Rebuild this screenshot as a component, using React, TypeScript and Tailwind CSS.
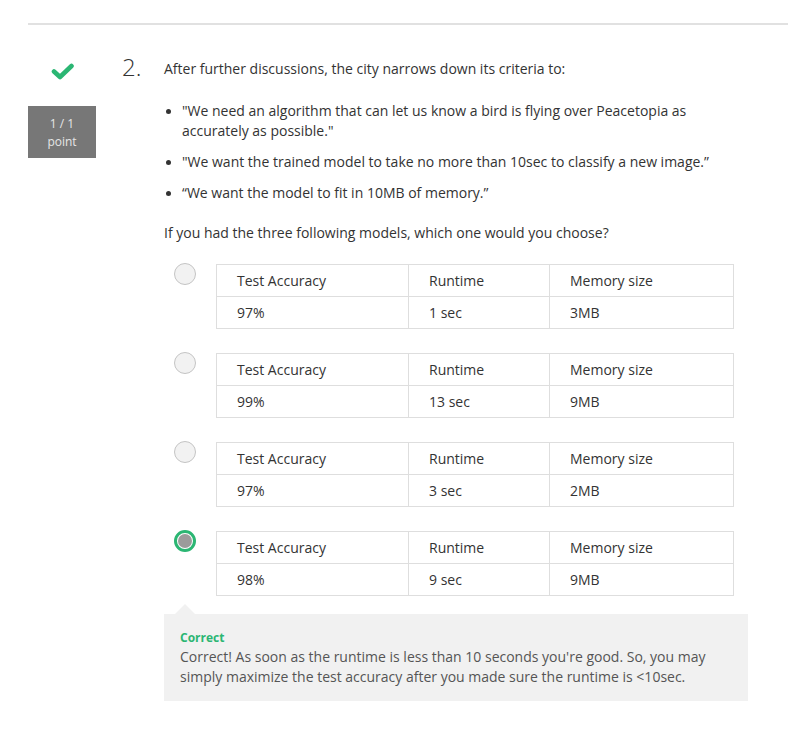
import React from "react";

const rows = [
  { acc: "97%", rt: "1 sec", mem: "3MB", selected: false },
  { acc: "99%", rt: "13 sec", mem: "9MB", selected: false },
  { acc: "97%", rt: "3 sec", mem: "2MB", selected: false },
  { acc: "98%", rt: "9 sec", mem: "9MB", selected: true },
];

function Radio({ selected }: { selected: boolean }) {
  if (selected) {
    return (
      <div className="w-[22px] h-[22px] rounded-full border-[3px] border-[#2bb673] bg-white p-[1px] shrink-0">
        <div className="w-full h-full rounded-full bg-[#9b9b9b]" />
      </div>
    );
  }
  return <div className="w-[22px] h-[22px] rounded-full border border-[#c4c4c4] bg-[#f2f2f2] shrink-0" />;
}

function Option({ acc, rt, mem, selected }: { acc: string; rt: string; mem: string; selected: boolean }) {
  return (
    <div className="flex items-start">
      <div className="ml-[10px] mt-[-1px]">
        <Radio selected={selected} />
      </div>
      <div className="ml-[20px] w-[518px] border border-[#dedede] text-[14px] text-[#333]">
        <div className="flex h-[32px] border-b border-[#dedede]">
          <div className="w-[192px] border-r border-[#dedede] pl-[20px] flex items-center">Test Accuracy</div>
          <div className="w-[141px] border-r border-[#dedede] pl-[20px] flex items-center">Runtime</div>
          <div className="flex-1 pl-[20px] flex items-center">Memory size</div>
        </div>
        <div className="flex h-[31px]">
          <div className="w-[192px] border-r border-[#dedede] pl-[20px] flex items-center">{acc}</div>
          <div className="w-[141px] border-r border-[#dedede] pl-[20px] flex items-center">{rt}</div>
          <div className="flex-1 pl-[20px] flex items-center">{mem}</div>
        </div>
      </div>
    </div>
  );
}

function Bullet({ children }: { children: React.ReactNode }) {
  return (
    <li className="flex">
      <span className="w-[18px] shrink-0 flex justify-start pl-[2px] pt-[8px]">
        <span className="block w-[5px] h-[5px] rounded-full bg-[#333]" />
      </span>
      <span>{children}</span>
    </li>
  );
}

export default function App() {
  return (
    <div className="min-h-[743px] w-[796px] bg-white font-['Open_Sans',sans-serif] text-[#333]">
      <div className="pl-[28px] pr-[8px]">
        <div className="mt-[23px] h-[2px] bg-[#e1e1e1]" />
        <div className="flex pt-[27px]">
          <div className="w-[68px] shrink-0 flex flex-col items-center">
            <svg className="mt-[11px]" width="23" height="17" viewBox="0 0 23 17">
              <path d="M3 8.5 L9 14 L20.5 3" fill="none" stroke="#2bb673" strokeWidth="4.6" strokeLinecap="round" strokeLinejoin="round" />
            </svg>
            <div className="mt-[26px] w-[68px] h-[52px] bg-[#777] text-[#e6e6e6] text-[12px] leading-[18px] flex flex-col items-center justify-center">
              <div className="mt-[1px]">1 / 1</div>
              <div>point</div>
            </div>
          </div>
          <div className="ml-[26px] w-[42px] shrink-0 text-[24px] leading-[30px] font-light text-[#333]">2.</div>
          <div className="w-[584px] text-[14px] leading-[20px]">
            <p className="mt-[7px]">After further discussions, the city narrows down its criteria to:</p>
            <ul className="mt-[22px] flex flex-col gap-[11px]">
              <Bullet>"We need an algorithm that can let us know a bird is flying over Peacetopia as accurately as possible."</Bullet>
              <Bullet>"We want the trained model to take no more than 10sec to classify a new image.”</Bullet>
              <Bullet>“We want the model to fit in 10MB of memory.”</Bullet>
            </ul>
            <p className="mt-[20px]">If you had the three following models, which one would you choose?</p>
            <div className="mt-[21px] flex flex-col gap-[24px]">
              {rows.map((r, i) => (
                <Option key={i} {...r} />
              ))}
            </div>
            <div className="relative mt-[18px] bg-[#f1f1f1] px-[16px] pt-[14px] pb-[14px]">
              <div className="absolute left-[11px] top-[-10px] w-0 h-0 border-l-[10px] border-r-[10px] border-b-[10px] border-l-transparent border-r-transparent border-b-[#f1f1f1]" />
              <div className="text-[12px] leading-[19px] font-bold text-[#2bb673]">Correct</div>
              <p className="text-[#555]">
                Correct! As soon as the runtime is less than 10 seconds you're good. So, you may simply maximize the test accuracy after you made sure the runtime is &lt;10sec.
              </p>
            </div>
          </div>
        </div>
      </div>
    </div>
  );
}
